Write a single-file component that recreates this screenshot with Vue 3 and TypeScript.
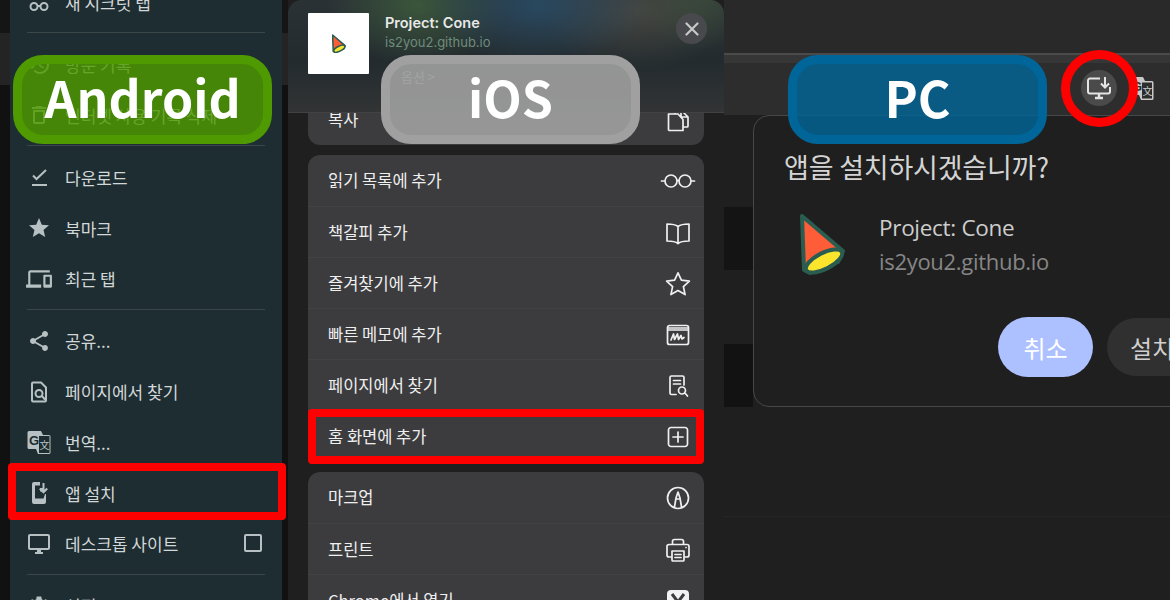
<script setup lang="ts">
interface MenuItem {
  label: string;
  d: string;
  stroke?: boolean;
  translate?: boolean;
  install?: boolean;
  check?: boolean;
}

interface SheetItem {
  label: string;
  d: string;
  vb?: string;
  w?: number;
  dark?: string;
  fill?: boolean;
  hl?: boolean;
}

const androidGroups: MenuItem[][] = [
  [{ label: '새 시크릿 탭', stroke: true, d: 'M3 8l2-5h14l2 5M1 9h22M7 20a3.5 3.5 0 1 0 0-7 3.500 3.500 0 0 0 0 7zM17 20a3.500 3.500 0 1 0 0-7 3.500 3.500 0 0 0 0 7zM10.500 16h3' }],
  [
    { label: '방문 기록', d: 'M13 3a9 9 0 0 0-9 9H1l3.890 3.890.070.140L9 12H6c0-3.870 3.130-7 7-7s7 3.130 7 7-3.130 7-7 7c-1.930 0-3.680-.790-4.940-2.060l-1.420 1.420A8.954 8.954 0 0 0 13 21a9 9 0 0 0 0-18zm-1 5v5l4.280 2.540.720-1.210-3.500-2.080V8H12z' },
    { label: '인터넷 사용 기록 삭제', d: 'M6 19c0 1.100.900 2 2 2h8c1.100 0 2-.900 2-2V7H6v12zM8 9h8v10H8V9zm7.500-5l-1-1h-5l-1 1H5v2h14V4z' },
  ],
  [
    { label: '다운로드', stroke: true, d: 'M6 10.500l3.500 3.500L19 5M5 20h15' },
    { label: '북마크', d: 'M12 17.270L18.180 21l-1.640-7.030L22 9.240l-7.190-.610L12 2 9.190 8.630 2 9.240l5.460 4.730L5.820 21z' },
    { label: '최근 탭', d: 'M4 6h18V4H4c-1.100 0-2 .900-2 2v11H0v3h14v-3H4V6zm19 2h-6c-.550 0-1 .450-1 1v10c0 .550.450 1 1 1h6c.550 0 1-.450 1-1V9c0-.550-.450-1-1-1zm-1 9h-4v-7h4v7z' },
  ],
  [
    { label: '공유...', d: 'M18 16.080c-.760 0-1.440.300-1.960.770L8.910 12.700c.050-.230.090-.460.090-.700s-.040-.470-.090-.700l7.050-4.110c.540.500 1.250.810 2.040.810 1.660 0 3-1.340 3-3s-1.340-3-3-3-3 1.340-3 3c0 .240.040.470.090.700L8.040 9.810C7.500 9.310 6.790 9 6 9c-1.660 0-3 1.340-3 3s1.340 3 3 3c.790 0 1.500-.310 2.040-.810l7.120 4.160c-.050.210-.080.430-.080.650 0 1.610 1.310 2.920 2.920 2.920s2.920-1.310 2.920-2.920-1.310-2.920-2.920-2.920z' },
    { label: '페이지에서 찾기', stroke: true, d: 'M5 3.500a1 1 0 0 1 1-1h8l5 5v13a1 1 0 0 1-1 1H6a1 1 0 0 1-1-1zM12 17a3.500 3.500 0 1 0 0-7 3.500 3.500 0 0 0 0 7zM14.500 15.500l3.500 4' },
    { label: '번역...', translate: true, d: '' },
    { label: '앱 설치', install: true, d: '' },
    { label: '데스크톱 사이트', check: true, d: 'M21 2H3c-1.100 0-2 .900-2 2v12c0 1.100.900 2 2 2h7v2H8v2h8v-2h-2v-2h7c1.100 0 2-.900 2-2V4c0-1.100-.900-2-2-2zm0 14H3V4h18v12z' },
  ],
  [{ label: '설정', d: 'M19.140 12.940c.040-.300.060-.610.060-.940 0-.320-.020-.640-.070-.940l2.030-1.580a.490.490 0 0 0 .120-.610l-1.920-3.320a.488.488 0 0 0-.590-.220l-2.390.960c-.500-.380-1.030-.700-1.620-.940l-.360-2.540a.484.484 0 0 0-.480-.410h-3.840c-.240 0-.430.170-.470.410l-.360 2.540c-.590.240-1.130.570-1.620.940l-2.390-.960c-.220-.080-.470 0-.590.220L2.740 8.870c-.120.210-.080.470.120.610l2.030 1.580c-.050.300-.090.630-.090.940s.020.640.070.940l-2.030 1.580a.490.490 0 0 0-.120.610l1.920 3.320c.120.220.370.290.590.220l2.390-.960c.500.380 1.030.700 1.620.940l.360 2.540c.050.240.240.410.480.410h3.840c.240 0 .440-.170.470-.410l.360-2.540c.590-.240 1.130-.560 1.620-.940l2.390.960c.220.080.470 0 .590-.220l1.920-3.320c.120-.220.070-.470-.120-.610l-2.010-1.580zM12 15.600c-1.980 0-3.600-1.620-3.600-3.600s1.620-3.600 3.600-3.600 3.600 1.620 3.600 3.600-1.620 3.600-3.600 3.600z' }],
];

const sheetGroups: SheetItem[][] = [
  [{ label: '복사', d: 'M9 6V2h6l7 7v9a1 1 0 0 1-1 1h-4M2.500 6h9.500l5 5.500V22.500H3.500a1 1 0 0 1-1-1zM15 2v7h7' }],
  [
    { label: '읽기 목록에 추가', vb: '0 0 34 24', w: 34, d: 'M10 18a6 6 0 1 0 0-12 6 6 0 0 0 0 12zM24 18a6 6 0 1 0 0-12 6 6 0 0 0 0 12zM4 12H.500M16 12c.500-.800 1.500-.800 2 0M30 12h3.500' },
    { label: '책갈피 추가', d: 'M12 5.500C9.500 3.500 5.500 3 1 3v17c4.500 0 8.500.500 11 2.500 2.500-2 6.500-2.500 11-2.500V3c-4.500 0-8.500.500-11 2.500zM12 5.500v17' },
    { label: '즐겨찾기에 추가', d: 'M12 .800l3.400 7.400 8 .900-6 5.500 1.700 8L12 18.600l-7.100 4 1.700-8-6-5.500 8-.900z' },
    { label: '빠른 메모에 추가', d: 'M3.500 2.500h17a2 2 0 0 1 2 2v15a2 2 0 0 1-2 2h-17a2 2 0 0 1-2-2v-15a2 2 0 0 1 2-2zM1.500 5h21M1.500 7h21M5 17l2.500-6 1 5.500 3-5.500 1 5.500 2.500-4 1 3.500 2-1.500' },
    { label: '페이지에서 찾기', d: 'M10 20.500H5.500a1.500 1.500 0 0 1-1.500-1.500V3.500A1.500 1.500 0 0 1 5.500 2h11A1.500 1.500 0 0 1 18 3.500V11M7.500 6.500h7M7.500 10h7M16 20a3.500 3.500 0 1 0 0-7 3.500 3.500 0 0 0 0 7zM18.500 18.500l3 3.500' },
    { label: '홈 화면에 추가', hl: true, d: 'M5 2.500h14A2.500 2.500 0 0 1 21.500 5v14a2.500 2.500 0 0 1-2.500 2.500H5A2.500 2.500 0 0 1 2.500 19V5A2.500 2.500 0 0 1 5 2.500zM12 7v10M7 12h10' },
  ],
  [
    { label: '마크업', d: 'M12 22.500a10.500 10.500 0 1 0 0-21 10.500 10.500 0 0 0 0 21zM8.500 21l1.500-9 2-6 2 6 1.500 9M10 13h4' },
    { label: '프린트', d: 'M6.500 6V3.500a2 2 0 0 1 2-2h7a2 2 0 0 1 2 2V6M6 19H3a2 2 0 0 1-2-2V8.500a2 2 0 0 1 2-2h18a2 2 0 0 1 2 2V17a2 2 0 0 1-2 2h-3M6 13h12v9a1 1 0 0 1-1 1H7a1 1 0 0 1-1-1zM9 16.500h6M9 19.500h6M20 9.500h.100' },
    { label: 'Chrome에서 열기', fill: true, d: 'M5 1h14a4 4 0 0 1 4 4v14a4 4 0 0 1-4 4H5a4 4 0 0 1-4-4V5a4 4 0 0 1 4-4z', dark: 'M6 5l6 8 6-8M12 13v8' },
  ],
];
</script>

<template>
  <div class="page">
    <section class="android">
      <div class="android-menu">
        <template v-for="(group, i) in androidGroups" :key="i">
          <div v-if="i > 0" class="android-divider"></div>
          <div v-for="item in group" :key="item.label" class="android-row">
            <svg v-if="item.translate" class="android-icon" viewBox="0 0 24 24">
              <path d="M2 1h12l2 4h6a1.500 1.500 0 0 1 1.500 1.500v16a1.500 1.500 0 0 1-1.500 1.500H11l-2-5H2a1.500 1.500 0 0 1-1.500-1.500V2.500A1.500 1.500 0 0 1 2 1z" fill="#b7c0c2" />
              <path d="M12 6h10.500v17H12z" fill="#1e2d31" />
              <text x="2" y="15" class="svg-g">G</text>
              <text x="12.500" y="19" class="svg-wen">文</text>
            </svg>
            <svg v-else-if="item.install" class="android-icon" viewBox="0 0 24 24">
              <path d="M7 1h6v6h3v6l3 0v8a2 2 0 0 1-2 2H7a2 2 0 0 1-2-2V3a2 2 0 0 1 2-2z" fill="#b7c0c2" />
              <path d="M8 4.500h5v6h6l-2.500 7H8z" fill="#1e2d31" />
              <path d="M16.500 2v9M12.800 7.500l3.700 3.800 3.700-3.800" fill="none" stroke="#b7c0c2" stroke-width="2" />
            </svg>
            <svg v-else class="android-icon" viewBox="0 0 24 24" :class="{ wide: item.label === '최근 탭' }">
              <path v-if="item.stroke" :d="item.d" fill="none" stroke="#b7c0c2" stroke-width="2" />
              <path v-else :d="item.d" fill="#b7c0c2" />
            </svg>
            <span class="android-label">{{ item.label }}</span>
            <span v-if="item.check" class="android-check"></span>
            <span v-if="item.install" class="android-highlight"></span>
          </div>
        </template>
      </div>
    </section>

    <section class="ios">
      <header class="sheet-head">
        <div class="sheet-app">
          <div class="sheet-thumb">
            <svg width="14" height="19" viewBox="0 0 46 62">
              <path d="M2 3l41 35-5 11-28 11-6-3z" fill="#ff5c38" stroke="#2a5c50" stroke-width="5" stroke-linejoin="round" />
              <ellipse cx="24" cy="48" rx="20" ry="8" transform="rotate(-27 24 48)" fill="#fbe52c" stroke="#2a5c50" stroke-width="5" />
            </svg>
          </div>
          <div class="sheet-meta">
            <div class="sheet-title">Project: Cone</div>
            <div class="sheet-domain">is2you2.github.io</div>
          </div>
          <div class="sheet-close">
            <svg width="14" height="14" viewBox="0 0 14 14">
              <path d="M1.500 1.500l11 11M12.500 1.500l-11 11" stroke="#c8c8c8" stroke-width="2.200" stroke-linecap="round" />
            </svg>
          </div>
        </div>
        <div class="sheet-options">옵션 &gt;</div>
      </header>

      <div class="sheet-groups">
        <div v-for="(group, i) in sheetGroups" :key="i" class="sheet-card">
          <div v-for="item in group" :key="item.label" class="sheet-row">
            <span class="sheet-label">{{ item.label }}</span>
            <span class="sheet-icon-box">
              <svg :width="item.w ?? 24" height="24" :viewBox="item.vb ?? '0 0 24 24'" class="sheet-icon">
                <path v-if="item.fill" :d="item.d" fill="#f2f2f2" />
                <path v-else :d="item.d" fill="none" stroke="#f0f0f0" stroke-width="1.700" stroke-linejoin="round" stroke-linecap="round" />
                <path v-if="item.dark" :d="item.dark" fill="none" stroke="#3c3c3f" stroke-width="3" />
              </svg>
            </span>
            <span v-if="item.hl" class="sheet-highlight"></span>
          </div>
        </div>
      </div>
    </section>

    <section class="pc">
      <div class="pc-tabs"></div>
      <div class="pc-toolbar">
        <div class="pc-install">
          <svg width="26" height="24" viewBox="0 0 26 24">
            <path d="M14 2.500H4A2 2 0 0 0 2 4.500v11a2 2 0 0 0 2 2h18a2 2 0 0 0 2-2V11" fill="none" stroke="#e4e4e4" stroke-width="2" />
            <path d="M19 1v10M15 7.500l4 4 4-4" fill="none" stroke="#e4e4e4" stroke-width="2" />
            <path d="M9 22h8M13 18v4" fill="none" stroke="#e4e4e4" stroke-width="2.500" />
          </svg>
        </div>
        <svg class="pc-translate" width="24" height="24" viewBox="0 0 24 24">
          <path d="M2 1h11l2 4h7a1.500 1.500 0 0 1 1.500 1.500v16a1.500 1.500 0 0 1-1.500 1.500H11l-2-5H2a1.500 1.500 0 0 1-1.500-1.500V2.500A1.500 1.500 0 0 1 2 1z" fill="#c9c9c9" />
          <path d="M12 6.500h10v16H12z" fill="#2d2d2d" />
          <text x="2" y="15" class="svg-g dark">G</text>
          <text x="12.500" y="19" class="svg-wen light">文</text>
        </svg>
      </div>
      <div class="pc-body">
        <div class="pc-stripes">
          <div class="stripe s1"></div>
          <div class="stripe s2"></div>
          <div class="stripe s3"></div>
        </div>
        <div class="dialog">
          <div class="dialog-title">앱을 설치하시겠습니까?</div>
          <div class="dialog-app">
            <svg width="46" height="62" viewBox="0 0 46 62">
              <path d="M2 3l41 35-5 11-28 11-6-3z" fill="#ff5c38" stroke="#2a5c50" stroke-width="4" stroke-linejoin="round" />
              <ellipse cx="24" cy="48" rx="20" ry="8" transform="rotate(-27 24 48)" fill="#fbe52c" stroke="#2a5c50" stroke-width="4" />
            </svg>
            <div class="dialog-meta">
              <div class="dialog-name">Project: Cone</div>
              <div class="dialog-domain">is2you2.github.io</div>
            </div>
          </div>
          <div class="dialog-actions">
            <button class="btn-cancel">취소</button>
            <button class="btn-install">설치</button>
          </div>
        </div>
      </div>
      <div class="pc-rule"></div>
    </section>

    <div class="badge badge-android">Android</div>
    <div class="badge badge-ios">iOS</div>
    <div class="badge badge-pc">PC</div>
    <div class="ring"></div>
  </div>
</template>

<style>
html,
body {
  margin: 0;
  background: #1f1f1f;
}
</style>

<style scoped>
.page {
  position: relative;
  display: flex;
  width: 1170px;
  height: 600px;
  overflow: hidden;
  background: #1f1f1f;
  font-family: "Noto Sans CJK KR", "Noto Sans", sans-serif;
}

/* android chrome menu */
.android {
  flex: 0 0 288px;
  box-sizing: border-box;
  padding: 0 6px 0 10px;
  background: linear-gradient(#151515 0 33px, #242424 33px 85px, #111 85px);
}

.android-menu {
  height: 600px;
  padding-top: 1px;
  box-sizing: border-box;
  background: #1e2d31;
}

.android-row {
  position: relative;
  display: flex;
  align-items: center;
  height: 50.700px;
  padding-left: 17px;
  color: #d2d7d8;
}

.android-row:first-child {
  margin-top: -24px;
}

.android-icon {
  flex: 0 0 24px;
  width: 24px;
  height: 24px;
  margin-right: 14px;
  overflow: visible;
}

.android-icon.wide {
  transform: scale(1.080);
}

.android-label {
  font-size: 17px;
  line-height: 1;
}

.android-check {
  position: absolute;
  left: 234px;
  top: 16px;
  box-sizing: border-box;
  width: 18px;
  height: 18px;
  border: 2.500px solid #b7c0c2;
  border-radius: 2px;
}

.android-highlight {
  position: absolute;
  left: -2px;
  right: -4px;
  top: -5px;
  bottom: -2px;
  border: 8.500px solid #ff0000;
  border-radius: 4px;
}

.android-divider {
  height: 1px;
  margin: 4.500px 17px 6px;
  background: #3a4648;
}

.svg-g {
  font: 700 13px "Liberation Sans", sans-serif;
  fill: #1e2d31;
}

.svg-g.dark {
  fill: #2d2d2d;
}

.svg-wen {
  font: 10px "Noto Sans CJK KR", sans-serif;
  fill: #b7c0c2;
}

.svg-wen.light {
  fill: #c9c9c9;
}

/* ios share sheet */
.ios {
  flex: 0 0 436px;
  background: #1f1f1f;
}

.sheet-head {
  position: relative;
  z-index: 1;
  box-sizing: border-box;
  height: 113px;
  padding: 13px 20px 0;
  border-radius: 14px 14px 0 0;
  border-bottom: 1px solid #414343;
  background:
    radial-gradient(ellipse 70px 50px at 415px 0, rgba(64, 90, 60, 0.45), transparent),
    radial-gradient(ellipse 110px 60px at 250px 5px, rgba(40, 80, 110, 0.75), transparent),
    radial-gradient(ellipse 90px 60px at 130px 5px, rgba(60, 90, 60, 0.9), transparent),
    radial-gradient(ellipse 100px 60px at 350px 10px, rgba(80, 78, 70, 0.7), transparent),
    linear-gradient(#2b3236, #232b2e 55%, #323435);
}

.sheet-app {
  display: flex;
  align-items: flex-start;
}

.sheet-thumb {
  display: flex;
  align-items: center;
  justify-content: center;
  flex: 0 0 61px;
  height: 61px;
  border-radius: 1px;
  background: #fff;
}

.sheet-meta {
  flex: 1;
  margin-left: 16px;
}

.sheet-title {
  font: 600 14.500px/20px Inter, sans-serif;
  color: #e8e8e8;
}

.sheet-domain {
  font: 400 13px/19px Inter, sans-serif;
  color: #6f8c7c;
}

.sheet-close {
  display: flex;
  align-items: center;
  justify-content: center;
  width: 31px;
  height: 31px;
  margin-right: -3px;
  border-radius: 50%;
  background: #48494c;
}

.sheet-options {
  margin: -7px 0 0 93px;
  font-size: 13px;
  line-height: 20px;
  color: #b9b9b9;
}

.sheet-groups {
  display: flex;
  flex-direction: column;
  gap: 10px;
  margin-top: -19px;
  padding: 0 20px;
}

.sheet-card {
  border-radius: 12px;
  background: #3c3c3f;
}

.sheet-card:nth-child(3) {
  margin-top: 1px;
}

.sheet-row {
  position: relative;
  display: flex;
  align-items: center;
  justify-content: space-between;
  box-sizing: border-box;
  height: 51px;
  padding: 0 9px 0 20px;
  border-top: 1px solid #424245;
  color: #efefef;
}

.sheet-row:first-child {
  border-top: none;
}

.sheet-label {
  font-size: 16.500px;
  line-height: 1;
}

.sheet-icon-box {
  display: flex;
  justify-content: center;
  flex: 0 0 34px;
}

.sheet-icon {
  display: block;
  margin-top: 1px;
  overflow: visible;
}

.sheet-highlight {
  position: absolute;
  left: 0;
  right: 0;
  top: -2px;
  bottom: -3px;
  border: 8.500px solid #ff0000;
  border-radius: 4px;
}

/* desktop chrome dialog */
.pc {
  flex: 1;
  min-width: 0;
  overflow: hidden;
}

.pc-tabs {
  height: 53px;
  border-bottom: 2px solid #4a4a4a;
  background: #292929;
}

.pc-toolbar {
  display: flex;
  align-items: center;
  box-sizing: border-box;
  height: 60px;
  padding-left: 357px;
  background: linear-gradient(#363636 0 8px, #2d2d2d 8px);
}

.pc-install {
  display: flex;
  align-items: center;
  justify-content: center;
  width: 36px;
  height: 36px;
  margin-top: 6px;
  border-radius: 50%;
  background: #4a4a4a;
}

.pc-translate {
  margin: 6px 0 0 13px;
}

.pc-body {
  display: flex;
  margin-right: -60px;
}

.pc-stripes {
  flex: 0 0 29px;
}

.stripe.s1 {
  height: 92px;
  background: #1f1f1f;
}

.stripe.s2 {
  height: 63px;
  background: #141414;
}

.stripe.s3 {
  height: 74px;
  background: #1f1f1f;
}

.pc-stripes::after {
  content: "";
  display: block;
  height: 63px;
  background: #121212;
}

.dialog {
  flex: 1;
  box-sizing: border-box;
  height: 292px;
  padding: 33px 0 0 30px;
  border: 1.500px solid #44484a;
  border-radius: 16px 0 0 16px;
  background: #1f1f1f;
}

.dialog-title {
  font-size: 27px;
  line-height: 36px;
  letter-spacing: -0.200px;
  color: #d4d4d4;
}

.dialog-app {
  display: flex;
  align-items: flex-start;
  margin: 28px 0 0 16px;
}

.dialog-meta {
  margin-left: 33px;
}

.dialog-name {
  font: 400 22.500px/30px "Open Sans", sans-serif;
  letter-spacing: -0.300px;
  color: #cdcdcd;
}

.dialog-domain {
  margin-top: 3px;
  font: 400 22px/30px "Open Sans", sans-serif;
  letter-spacing: -0.300px;
  color: #868686;
}

.dialog-actions {
  display: flex;
  align-items: center;
  gap: 14px;
  margin: 41px 0 0 214px;
}

.dialog-actions button {
  height: 58px;
  border: none;
  border-radius: 29px;
  font: 400 24px "Noto Sans CJK KR", sans-serif;
}

.dialog-actions .btn-cancel {
  width: 95px;
  height: 60px;
  border-radius: 30px;
  background: #adc0ff;
  color: #fff;
}

.dialog-actions .btn-install {
  width: 110px;
  padding: 0 0 0 23px;
  text-align: left;
  background: #303030;
  color: #cfcfcf;
}

.pc-rule {
  height: 1px;
  margin-top: 109px;
  background: #262626;
}

/* overlays */
.badge {
  position: absolute;
  z-index: 2;
  top: 55px;
  display: flex;
  align-items: center;
  justify-content: center;
  box-sizing: border-box;
  width: 259px;
  height: 89px;
  padding-bottom: 7px;
  border-width: 9px;
  border-style: solid;
  border-radius: 30px;
  font: 700 50px/1 "Noto Sans CJK KR", sans-serif;
  color: #fff;
}

.badge-android {
  left: 13px;
  border-color: #4e9a00;
  background: rgba(78, 154, 0, 0.82);
}

.badge-ios {
  left: 381px;
  border-color: #a0a0a0;
  background: rgba(160, 160, 160, 0.9);
}

.badge-pc {
  left: 788px;
  border-color: #006699;
  background: rgba(0, 102, 153, 0.8);
}

.ring {
  position: absolute;
  z-index: 2;
  left: 1061px;
  top: 50px;
  box-sizing: border-box;
  width: 77px;
  height: 77px;
  border: 9px solid #ff0000;
  border-radius: 50%;
}
</style>
